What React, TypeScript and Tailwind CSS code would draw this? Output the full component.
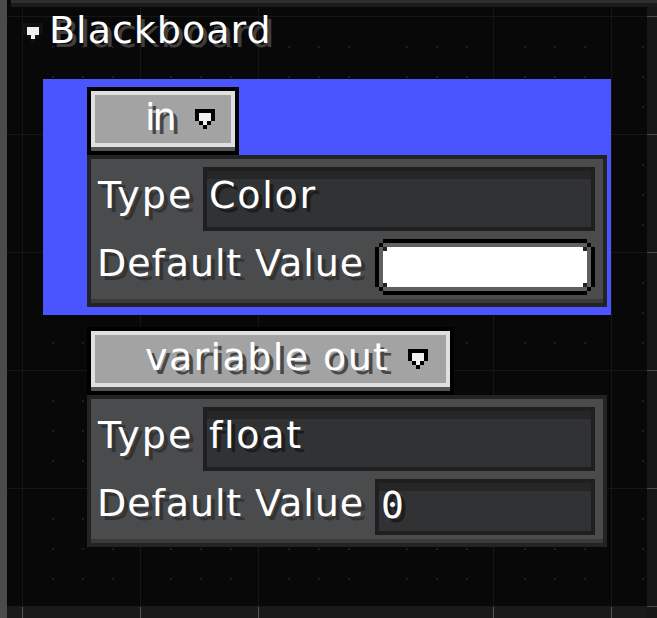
import React from 'react';

const MAJOR_X = [22, 140, 258, 493, 611];
const MAJOR_Y = [16, 134, 252, 370, 488];

// minor dots sit 30/60/90 past every major line
const dotsFrom = (start: number, count: number) => {
  const out: number[] = [];
  for (let i = 0; i < count; i++) {
    const base = start + i * 118;
    out.push(base + 30, base + 60, base + 90);
  }
  return out;
};

const GridLines = () => (
  <svg className="absolute inset-0 pointer-events-none" width={657} height={618} shapeRendering="crispEdges">
    {MAJOR_X.map(x => (
      <rect key={x} x={x} y={0} width={1} height={606} fill="#161616" />
    ))}
    {MAJOR_Y.map(y => (
      <rect key={y} x={0} y={y} width={647} height={1} fill="#161616" />
    ))}
    {dotsFrom(22, 6).map(x =>
      dotsFrom(16, 5).map(y => <rect key={`${x}-${y}`} x={x} y={y} width={2} height={2} fill="#1d1d1d" />)
    )}
  </svg>
);

const Arrow = ({ outline = '#000' }: { outline?: string }) => (
  <svg width={20} height={20} viewBox="0 0 5 5" shapeRendering="crispEdges" className="shrink-0">
    <path d="M0 0h5v3h-1v1h-1v1h-1v-1h-1v-1h-1z" fill={outline} />
    <path d="M1 1h3v2h-1v1h-1v-1h-1z" fill="#f0f0f0" />
  </svg>
);

const Dropdown = ({ label, narrow }: { label: string; narrow?: boolean }) => (
  <div className="self-start p-1 bg-black">
    <div className={`h-14 border-4 border-[#e0e0e0] bg-[#a3a3a4] flex items-center pl-[50px] ${narrow ? 'pr-4' : 'pr-[18px]'}`}>
      <span className={`text-[38px] leading-none text-white [text-shadow:4px_4px_#484848] -translate-y-0.5 whitespace-nowrap ${narrow ? 'tracking-[-3px] mr-[21px]' : 'tracking-[1.4px] mr-[19px]'}`}>{label}</span>
      <Arrow />
    </div>
    <div className="h-1 bg-[#555]" />
  </div>
);

const InputBox = ({ value, tall, mono }: { value: string; tall?: boolean; mono?: boolean }) => (
  <div className={`flex-1 border-4 border-[#1f1f1f] ${tall ? 'h-16' : 'h-14'}`}>
    <div className="h-full border-t-8 border-[#262626] bg-[#313234] pl-0.5 flex items-center">
      <span className={`text-[38px] leading-none text-white [text-shadow:4px_4px_#1c1c1c] ${tall ? '-translate-y-2' : '-translate-y-1.5'} ${mono ? "font-['DejaVu_Sans_Mono',monospace]" : 'tracking-[1.7px]'}`}>{value}</span>
    </div>
  </div>
);

const ColorSwatch = () => (
  <div className="flex-1 p-2 h-14">
    <div className="relative h-10 bg-white shadow-[0_-4px_#606060,0_4px_#606060,-4px_0_#606060,4px_0_#606060,0_-8px_#000,0_8px_#000,-8px_0_#000,8px_0_#000,-4px_-4px_#000,4px_-4px_#000,-4px_4px_#000,4px_4px_#000]">
      <span className="absolute left-0 top-0 size-1 bg-[#222]" />
      <span className="absolute right-0 top-0 size-1 bg-[#222]" />
      <span className="absolute left-0 bottom-0 size-1 bg-[#222]" />
      <span className="absolute right-0 bottom-0 size-1 bg-[#222]" />
    </div>
  </div>
);

const Entry = ({ name, type, narrow, highlighted, children }: { name: string; type: string; narrow?: boolean; highlighted?: boolean; children: React.ReactNode }) => (
  <div className={`pl-11 pr-1 py-2 flex flex-col ${highlighted ? 'bg-[#4a55ff]' : ''}`}>
    <Dropdown label={name} narrow={narrow} />
    <div className="border-4 border-[#232323]">
      <div className="bg-[#4a4b4d] border-b-4 border-[#3a3a3b] pt-2 pb-1 pl-[7px] pr-2 flex flex-col gap-2">
        <div className="flex items-center">
          <span className="w-[105px] text-[38px] leading-none tracking-[2px] text-white [text-shadow:4px_4px_#333] whitespace-nowrap -translate-y-1">Type</span>
          <InputBox value={type} tall />
        </div>
        <div className="flex items-center">
          <span className="w-[277px] -ml-px mr-px text-[38px] leading-none tracking-[0.9px] text-white [text-shadow:4px_4px_#333] whitespace-nowrap -translate-y-1">Default Value</span>
          {children}
        </div>
      </div>
    </div>
  </div>
);

export default function App() {
  return (
    <div className="relative w-[657px] h-[618px] bg-[#080808] flex overflow-hidden font-['DejaVu_Sans',sans-serif]">
      <GridLines />
      <div className="relative w-[7px] bg-[#4a4b4c]" />
      <div className="relative flex-1 flex flex-col">
        <div className="h-[3px] ml-1 bg-[#2e2f31]" />
        <div className="h-1 ml-1 bg-[#1b1b1b]" />
        <div className="flex-1 flex">
          <div className="flex-1 flex flex-col">
            <div className="flex-1">
              <div className="h-[72px] pl-4 pb-5 flex items-center gap-[6px]">
                <Arrow outline="#111" />
                <span className="text-[38px] leading-none tracking-[1px] text-white [text-shadow:4px_4px_#3f3f3f] -translate-y-[3px]">Blackboard</span>
              </div>
              <div className="mx-9 flex flex-col gap-1">
                <Entry name="in" type="Color" narrow highlighted>
                  <ColorSwatch />
                </Entry>
                <Entry name="variable out" type="float">
                  <InputBox value="0" mono />
                </Entry>
              </div>
            </div>
            {/* ruler along the bottom */}
            <div className="relative h-3 bg-[#1a1a1a]">
              {MAJOR_X.map(x => (
                <span key={x} className="absolute top-px bottom-0 w-px bg-[#555]" style={{ left: x - 7 }} />
              ))}
            </div>
          </div>
          {/* ruler down the right side */}
          <div className="relative w-[10px] bg-[#171717]">
            {[...MAJOR_Y, 606].map(y => (
              <span key={y} className="absolute left-0 right-0 h-px bg-[#4a4a4a]" style={{ top: y - 7 }} />
            ))}
          </div>
        </div>
      </div>
    </div>
  );
}
